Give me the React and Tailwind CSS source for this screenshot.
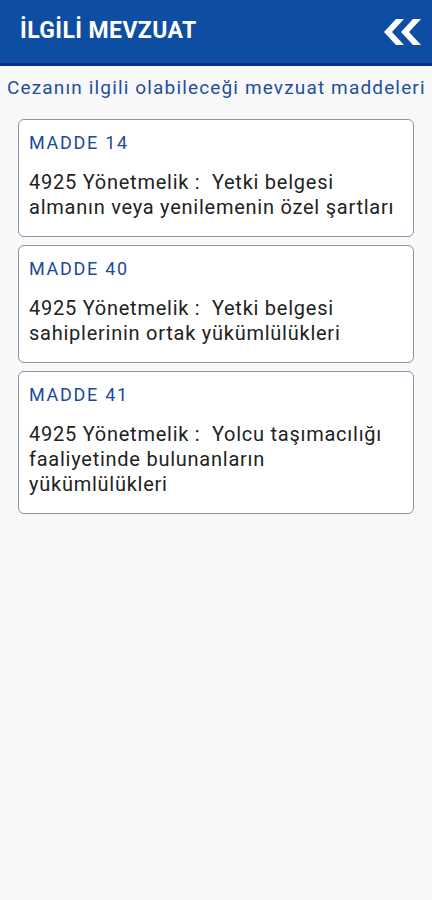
const ITEMS = [
  { madde: 'MADDE 14', text: '4925 Yönetmelik :  Yetki belgesi almanın veya yenilemenin özel şartları' },
  { madde: 'MADDE 40', text: '4925 Yönetmelik :  Yetki belgesi sahiplerinin ortak yükümlülükleri' },
  { madde: 'MADDE 41', text: '4925 Yönetmelik :  Yolcu taşımacılığı faaliyetinde bulunanların yükümlülükleri' },
];

function BackIcon() {
  return (
    <svg width="38" height="26" viewBox="0 0 38 26" fill="white">
      <path d="M12 0 L20 0 L8 13 L20 26 L12 26 L0 13 Z" />
      <path d="M29 0 L37 0 L25 13 L37 26 L29 26 L17 13 Z" />
    </svg>
  );
}

export default function App() {
  return (
    <div className="min-h-[900px] bg-[#f8f8f8] font-['Roboto',sans-serif]">
      <header className="flex h-[66px] items-center justify-between border-b-[3px] border-[#0b2f8f] bg-[#0e4ea2] pl-5 pr-[10px]">
        <h1 className="text-[23px] font-bold tracking-[0.4px] text-white">İLGİLİ MEVZUAT</h1>
        <BackIcon />
      </header>
      <p className="whitespace-nowrap pl-[7px] pt-[10px] text-[19px] leading-6 tracking-[1.15px] text-[#1d4f9d]">
        Cezanın ilgili olabileceği mevzuat maddeleri
      </p>
      <div className="flex flex-col gap-2 px-[18px] pt-[19px]">
        {ITEMS.map((item) => (
          <div
            key={item.madde}
            className="rounded-[6px] border border-[#8a93a8] bg-white pl-[10px] pr-[8px] pt-[11px] pb-[16px]"
          >
            <div className="text-[18px] leading-6 tracking-[1.7px] text-[#1a4a9c]">{item.madde}</div>
            <div className="mt-[15px] whitespace-pre-wrap text-[20px] leading-[25px] tracking-[0.75px] text-[#222]">
              {item.text}
            </div>
          </div>
        ))}
      </div>
    </div>
  );
}
